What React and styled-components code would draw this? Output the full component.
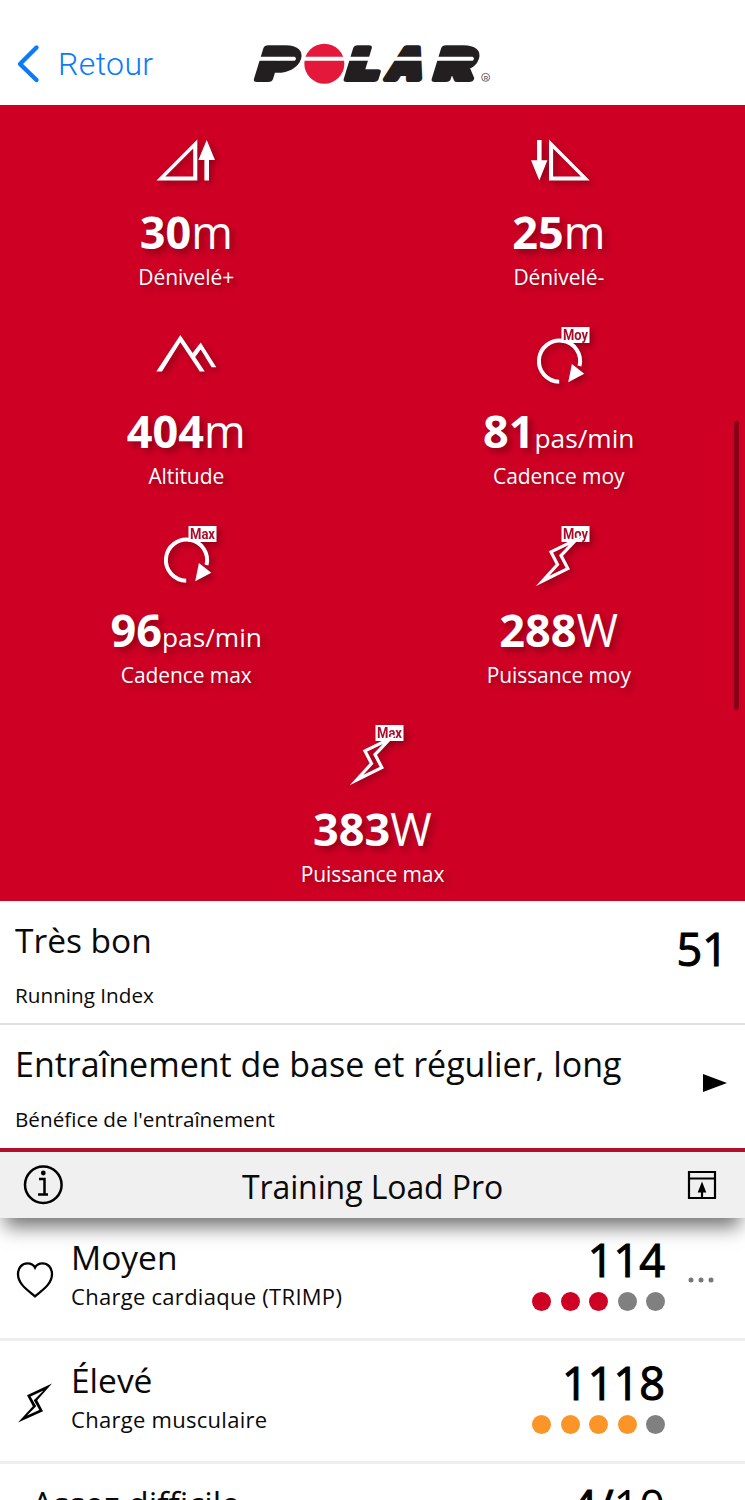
import styled, { createGlobalStyle } from "styled-components";

const stats = [
  { icon: "up", value: "30", unit: "m", label: "Dénivelé+" },
  { icon: "down", value: "25", unit: "m", label: "Dénivelé-" },
  { icon: "mountain", value: "404", unit: "m", label: "Altitude" },
  { icon: "cadence", tag: "Moy", value: "81", unit: "pas/min", small: true, label: "Cadence moy" },
  { icon: "cadence", tag: "Max", value: "96", unit: "pas/min", small: true, label: "Cadence max" },
  { icon: "power", tag: "Moy", value: "288", unit: "W", label: "Puissance moy" },
  { icon: "power", tag: "Max", value: "383", unit: "W", label: "Puissance max" },
]

const RED = "#ce0024"
const ORANGE = "#fc9527"
const GREY = "#808080"

function Tag({ text }) {
  return (
    <>
      <rect x="34.5" y="3" width="28" height="16" fill="#fff" />
      <text x="36" y="16.2" textLength="25" lengthAdjust="spacingAndGlyphs"
        fontFamily="Roboto" fontWeight="700" fontSize="14.5" fill="#ab0c2a">{text}</text>
    </>
  )
}

function StatIcon({ type, tag }) {
  return (
    <IconBox viewBox="0 0 64 64">
      {type === "up" && (
        <>
          <path fillRule="evenodd" d="M2.5 55.5L43.3 14.5V55.5ZM11.3 51.5H39.2V23.5Z" />
          <path d="M52.7 15L61 35H55V55.5H50.4V35H44.4Z" />
        </>
      )}
      {type === "down" && (
        <>
          <path fillRule="evenodd" d="M62.8 55.5L22 14.5V55.5ZM54 51.5H26.1V23.5Z" />
          <path d="M12.3 55.5L4 35.3H10V15H14.6V35.3H20.4Z" />
        </>
      )}
      {type === "mountain" && (
        <path d="M2.3 47.4L26.3 11L38.6 29L46.7 18.6L62.3 43.2H57.6L46.7 25.5L41.2 33L50.8 47.4H45.8L26.3 18.2L8 47.4Z" />
      )}
      {type === "cadence" && (
        <>
          <path d="M32.2 57.7A20.6 20.6 0 1 1 52.5 42" fill="none" stroke="#fff" strokeWidth="4" />
          <path d="M41.2 58.3L44.9 40L57.3 49.8Z" />
          <Tag text={tag} />
        </>
      )}
      {type === "power" && (
        <>
          <Tag text={tag} />
          <path fill="none" stroke="#fff" strokeWidth="3.2" strokeMiterlimit="10"
            d="M49 16.8L24 28.9L30.5 41.5L15.5 58L40.8 45.6L34 32.6Z" />
        </>
      )}
    </IconBox>
  )
}

// wordmark: wide slanted letters, the ball and the stripe through them
function Logo() {
  const letter = { fontFamily: "Inter", fontWeight: 900, fontSize: 100, fill: "#231f20", stroke: "#231f20", strokeWidth: 14, strokeLinejoin: "round" }
  return (
    <LogoSvg viewBox="0 0 810 210">
      <text {...letter} transform="translate(46 147) skewX(-17) scale(1.7 1.27)">P</text>
      <circle cx="253" cy="101" r="60" fill="#e4183a" />
      <text {...letter} transform="translate(315 147) skewX(-17) scale(1.66 1.27)">L</text>
      <text {...letter} transform="translate(435 147) skewX(-17) scale(1.32 1.27)">A</text>
      <text {...letter} transform="translate(579 147) skewX(-17) scale(1.7 1.27)">R</text>
      <path d="M40 80H164Q172 86 164 92H40ZM190 80H316V92H190ZM325 80H405V92H325ZM435 80H568V92H435ZM570 80H698Q706 86 698 92H570Z" fill="#fff" />
      <circle cx="737" cy="142" r="12" fill="none" stroke="#6a6768" strokeWidth="3" />
      <text x="731" y="149" fontFamily="Liberation Sans" fontWeight="700" fontSize="18" fill="#6a6768">R</text>
    </LogoSvg>
  )
}

function Rating({ count, color }) {
  return (
    <Dots>
      {[0, 1, 2, 3, 4].map(i => <Dot key={i} $color={i < count ? color : GREY} />)}
    </Dots>
  )
}

export default function App() {
  return (
    <Page>
      <GlobalStyle />
      <Header>
        <Back>
          <svg width="24" height="40" viewBox="0 0 24 40" fill="none" stroke="#0b7bf8" strokeWidth="4.4" strokeLinecap="round" strokeLinejoin="round">
            <path d="M20.5 3.5L4 20L20.5 36" />
          </svg>
          <span>Retour</span>
        </Back>
        <Logo />
      </Header>

      <Stats>
        {stats.map(s => (
          <Stat key={s.label}>
            <StatIcon type={s.icon} tag={s.tag} />
            <StatValue>{s.value}<Unit $small={s.small}>{s.unit}</Unit></StatValue>
            <StatLabel>{s.label}</StatLabel>
          </Stat>
        ))}
      </Stats>

      <Result $divider>
        <div>
          <Title>Très bon</Title>
          <ResultLabel>Running Index</ResultLabel>
        </div>
        <Score>51</Score>
      </Result>
      <Result>
        <div>
          <Title $size={34}>Entraînement de base et régulier, long</Title>
          <ResultLabel>Bénéfice de l'entraînement</ResultLabel>
        </div>
        <Arrow viewBox="0 0 24 20"><path d="M0 1L24 10L0 19Z" /></Arrow>
      </Result>

      <SectionBar>
        <svg width="40" height="40" viewBox="0 0 40 40">
          <circle cx="20.3" cy="19.7" r="18.3" fill="none" stroke="#000" strokeWidth="2.5" />
          <circle cx="20.3" cy="8" r="2.4" />
          <path d="M16 14H21.5V28.8M15 29.5H25" fill="none" stroke="#000" strokeWidth="2.5" />
        </svg>
        <SectionTitle>Training Load Pro</SectionTitle>
        <svg width="30" height="30" viewBox="0 0 30 30" fill="none" stroke="#000" strokeWidth="2.2">
          <path d="M2 2H28V28H2ZM2 8.5H28M15 28V20" />
          <path d="M15 11.5L19.3 22.5H10.7Z" fill="#000" stroke="none" />
        </svg>
      </SectionBar>

      <Load>
        <LoadIcon viewBox="0 0 38 40" fill="none" stroke="#000" strokeWidth="2.3">
          <path d="M19 36.3C13 31 2 24.5 2 14.2C2 7.2 6.5 3.3 11.5 3.3C15 3.3 17.5 4.6 19 7.6C20.5 4.6 23 3.3 26.5 3.3C31.5 3.3 36 7.2 36 14.2C36 24.5 25 31 19 36.3Z" />
        </LoadIcon>
        <LoadText>
          <Title>Moyen</Title>
          <LoadLabel>Charge cardiaque (TRIMP)</LoadLabel>
        </LoadText>
        <LoadScore>
          <Number>114</Number>
          <Rating count={3} color={RED} />
        </LoadScore>
        <More viewBox="0 0 26 6" fill="#777">
          <circle cx="3" cy="3" r="2.5" />
          <circle cx="13" cy="3" r="2.5" />
          <circle cx="23" cy="3" r="2.5" />
        </More>
      </Load>
      <Load>
        <LoadIcon viewBox="0 0 38 40">
          <path fillRule="evenodd" d="M36 0.5L11 12.3L16.8 23.3L2 39.5L27 28.2L21.2 17.2ZM27.5 7.5L17.8 17.2L23.3 27L11 32.5L20.2 23.2L14.6 13.6Z" />
        </LoadIcon>
        <LoadText>
          <Title>Élevé</Title>
          <LoadLabel>Charge musculaire</LoadLabel>
        </LoadText>
        <LoadScore>
          <Number>1118</Number>
          <Rating count={4} color={ORANGE} />
        </LoadScore>
      </Load>
      <Load $last>
        <LoadText>
          <Title>Assez difficile</Title>
        </LoadText>
        <LoadScore>
          <Number>4/<Total>10</Total></Number>
        </LoadScore>
      </Load>

      <ScrollThumb />
    </Page>
  )
}

const GlobalStyle = createGlobalStyle`
  body {
    margin: 0;
    background: #fff;
  }

  * {
    box-sizing: border-box;
  }

  svg {
    display: block;
    flex-shrink: 0;
  }
`;

const Page = styled.div`
  position: relative;
  width: 745px;
  height: 1500px;
  overflow: hidden;
  background: #fff;
  color: #0a0a0a;
  font-family: "Open Sans", sans-serif;
`;

const Header = styled.header`
  display: flex;
  height: 105px;
  padding-top: 30px;
`;

const Back = styled.div`
  display: flex;
  width: 240px;
  height: 68px;
  padding-left: 16px;
  align-items: center;
  gap: 18px;
  color: #0b7bf8;
  font-family: Roboto, sans-serif;
  font-size: 32px;
  font-weight: 350;
  letter-spacing: 0.4px;
`;

const LogoSvg = styled.svg`
  width: 270px;
  height: 70px;
`;

const Stats = styled.section`
  display: flex;
  flex-wrap: wrap;
  justify-content: center;
  height: 796px;
  background: ${RED};
  color: #fff;
`;

const Stat = styled.div`
  display: flex;
  flex-direction: column;
  align-items: center;
  width: 50%;
  height: 199px;
  padding-top: 20px;
  text-shadow: 4px 4px 6px rgba(0, 0, 0, 0.3);
`;

const IconBox = styled.svg`
  width: 64px;
  height: 64px;
  fill: #fff;
  overflow: visible;
  text-shadow: none;
  filter: drop-shadow(3px 3px 3px rgba(0, 0, 0, 0.3));
`;

const StatValue = styled.div`
  height: 60px;
  margin-top: 13px;
  line-height: 60px;
  font-size: 45px;
  font-weight: 700;
  white-space: nowrap;
`;

const Unit = styled.span`
  line-height: 1;
  font-size: ${p => p.$small ? 26.3 : 45}px;
  font-weight: 400;
`;

const StatLabel = styled.div`
  font-size: 21px;
  line-height: 30px;
  letter-spacing: -0.08px;
`;

const Result = styled.div`
  display: flex;
  justify-content: space-between;
  height: ${p => p.$divider ? 124 : 123}px;
  padding: 19px 18px 0 15px;
  border-bottom: ${p => p.$divider ? "2px solid #e0e0e0" : "none"};
`;

const Title = styled.div`
  font-size: ${p => p.$size || 33.5}px;
  line-height: 40px;
  white-space: nowrap;
`;

const ResultLabel = styled.div`
  margin-top: 21px;
  font-size: 20.7px;
  line-height: 28px;
`;

const Number = styled.div`
  font-size: 45px;
  font-weight: 400;
  line-height: 50px;
  color: #000;
  -webkit-text-stroke: 1.1px #000;
`;

const Score = styled(Number)`
  margin-right: -1px;
  padding-top: 4px;
`;

const Arrow = styled.svg`
  width: 24px;
  height: 20px;
  margin-top: 29px;
`;

const SectionBar = styled.div`
  display: flex;
  align-items: center;
  justify-content: space-between;
  height: 70px;
  padding: 0 28px 0 23px;
  border-top: 4px solid #b01029;
  background: #f0f0f0;
  box-shadow: 0 14px 18px -5px rgba(0, 0, 0, 0.55);
`;

const SectionTitle = styled.div`
  margin-right: 5px;
  padding-top: 4px;
  font-size: 32px;
  line-height: 40px;
  letter-spacing: -0.1px;
`;

const Load = styled.div`
  display: flex;
  height: 123px;
  padding-left: ${p => p.$last ? 15 : 16}px;
  border-bottom: 3px solid #eee;
`;

const LoadIcon = styled.svg`
  width: 38px;
  height: 40px;
  margin-top: 42px;
`;

const LoadText = styled.div`
  flex: 1;
  padding: 19px 0 0 17px;
`;

const LoadLabel = styled.div`
  margin-top: 5px;
  font-size: 22px;
  line-height: 28px;
  letter-spacing: 0.28px;
`;

const LoadScore = styled.div`
  display: flex;
  flex-direction: column;
  align-items: flex-end;
  padding-top: 17px;
  margin-right: 80px;

  &:has(+ svg) {
    margin-right: 23px;
  }
`;

const Total = styled.span`
  -webkit-text-stroke: 0;
`;

const Dots = styled.div`
  display: flex;
  gap: 9.4px;
  margin-top: 7px;
`;

const Dot = styled.i`
  width: 19px;
  height: 19px;
  border-radius: 50%;
  background: ${p => p.$color};
`;

const More = styled.svg`
  width: 26px;
  height: 6px;
  margin: 59px 31px 0 0;
`;

const ScrollThumb = styled.div`
  position: absolute;
  top: 421px;
  right: 6px;
  width: 5px;
  height: 289px;
  border-radius: 3px;
  background: #870018;
`;
